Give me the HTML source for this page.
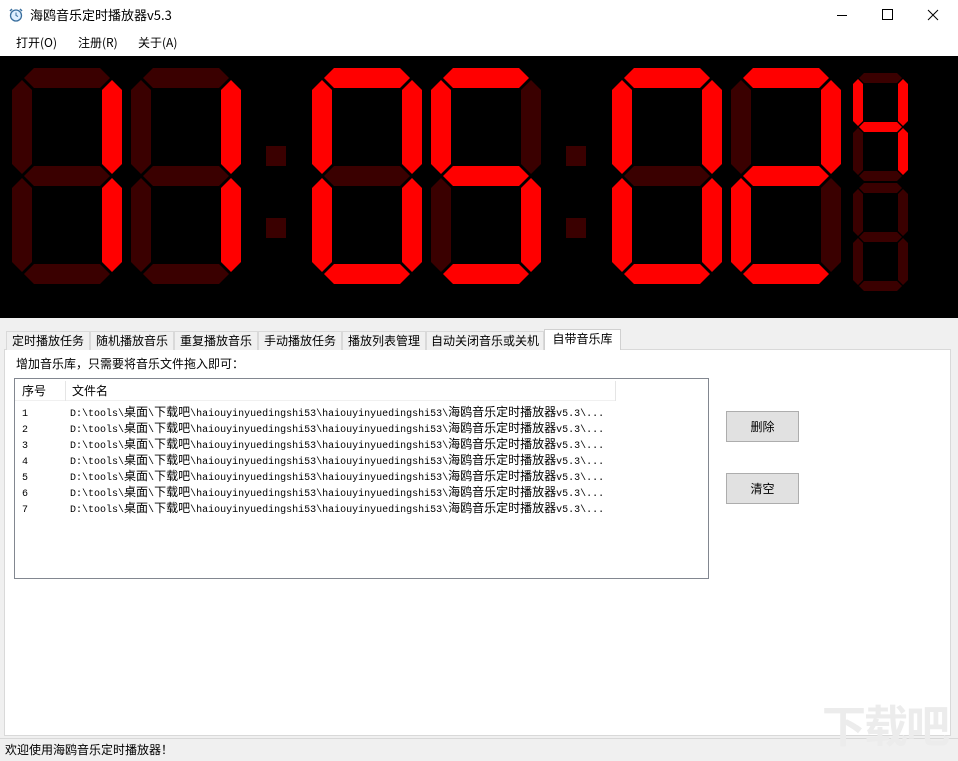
<!DOCTYPE html>
<html><head><meta charset="utf-8"><style>
*{margin:0;padding:0;box-sizing:border-box}
body{width:958px;height:761px;overflow:hidden;background:#f0f0f0;font-family:"Liberation Sans","Noto Sans CJK SC",sans-serif;font-size:12px;color:#000;position:relative}
.abs{position:absolute}
#title{left:0;top:0;width:958px;height:30px;background:#fff}
#menu{left:0;top:30px;width:958px;height:26px;background:#fff}
#clock{left:0;top:56px;width:958px;height:262px;background:#000}
.tab{position:absolute;top:331px;height:19px;border:1px solid #d9d9d9;border-bottom:none;background:#f0f0f0;font-size:12px;line-height:17px;text-align:center;font-family:"Noto Sans CJK SC",sans-serif}
.tab.sel{top:329px;height:21px;background:#fff;border-color:#d0d0d0}
#panel{left:4px;top:349px;width:947px;height:387px;background:#fff;border:1px solid #d9d9d9}
#list{left:14px;top:378px;width:695px;height:201px;background:#fff;border:1px solid #828790}
.row{position:absolute;left:7px;font-family:"Liberation Mono","Noto Sans CJK SC",monospace;font-size:10px;line-height:14px;white-space:pre}
.row .c{font-size:12px;font-family:"Noto Sans CJK SC",sans-serif}
.btn{position:absolute;left:726px;width:73px;height:31px;background:#e1e1e1;border:1px solid #adadad;text-align:center;line-height:29px;font-family:"Noto Sans CJK SC",sans-serif;font-size:12px}
#status{left:0;top:738px;width:958px;height:23px;background:#f0f0f0;border-top:1px solid #d8d8d8;font-family:"Noto Sans CJK SC",sans-serif;font-size:12px;line-height:22px;padding-left:5px}
</style></head><body>
<div id="title" class="abs">
<svg class="abs" style="left:8px;top:7px" width="16" height="16" viewBox="0 0 16 16"><circle cx="8" cy="8.5" r="5.5" fill="#dfefff" stroke="#3a6f9e" stroke-width="1.3"/><path d="M8 5.5V8.5L10 9.5" stroke="#3a6f9e" fill="none"/><path d="M2 4L4 2M14 4L12 2" stroke="#3a6f9e" stroke-width="1.5"/></svg>
<div class="abs" style="left:30px;top:6px;font-size:13px;font-family:'Noto Sans CJK SC',sans-serif;line-height:18px">海鸥音乐定时播放器v5.3</div>
<svg class="abs" style="left:830px;top:0" width="128" height="30"><path d="M7 15.5H17" stroke="#000"/><rect x="52.5" y="9.5" width="10" height="10" fill="none" stroke="#000"/><path d="M98 10L108 20M108 10L98 20" stroke="#000"/></svg>
</div>
<div id="menu" class="abs" style="font-family:'Noto Sans CJK SC',sans-serif;font-size:12px;line-height:26px">
<span class="abs" style="left:16px">打开(O)</span><span class="abs" style="left:78px">注册(R)</span><span class="abs" style="left:138px">关于(A)</span></div>
<div id="clock" class="abs">
<svg width="958" height="262" viewBox="0 56 958 262">
<defs>
<polygon id="sa" points="12,10 22,0 88,0 98,10 88,20 22,20"/>
<polygon id="sg" points="12,108 22,98 88,98 98,108 88,118 22,118"/>
<polygon id="sd" points="12,206 22,196 88,196 98,206 88,216 22,216"/>
<polygon id="sf" points="10,12 20,22 20,96 10,106 0,96 0,22"/>
<polygon id="sb" points="100,12 110,22 110,96 100,106 90,96 90,22"/>
<polygon id="se" points="10,110 20,120 20,194 10,204 0,194 0,120"/>
<polygon id="sc" points="100,110 110,120 110,194 100,204 90,194 90,120"/>
</defs>
<g transform="translate(12,68)"><use href="#sa" fill="#3a0000"/><use href="#sg" fill="#3a0000"/><use href="#sd" fill="#3a0000"/><use href="#sf" fill="#3a0000"/><use href="#se" fill="#3a0000"/><use href="#sb" fill="#ff0000"/><use href="#sc" fill="#ff0000"/></g>
<g transform="translate(131,68)"><use href="#sa" fill="#3a0000"/><use href="#sg" fill="#3a0000"/><use href="#sd" fill="#3a0000"/><use href="#sf" fill="#3a0000"/><use href="#se" fill="#3a0000"/><use href="#sb" fill="#ff0000"/><use href="#sc" fill="#ff0000"/></g>
<rect x="266" y="146" width="20" height="20" fill="#3a0000"/><rect x="266" y="218" width="20" height="20" fill="#3a0000"/>
<g transform="translate(312,68)"><use href="#sa" fill="#ff0000"/><use href="#sg" fill="#3a0000"/><use href="#sd" fill="#ff0000"/><use href="#sf" fill="#ff0000"/><use href="#se" fill="#ff0000"/><use href="#sb" fill="#ff0000"/><use href="#sc" fill="#ff0000"/></g>
<g transform="translate(431,68)"><use href="#sa" fill="#ff0000"/><use href="#sg" fill="#ff0000"/><use href="#sd" fill="#ff0000"/><use href="#sf" fill="#ff0000"/><use href="#se" fill="#3a0000"/><use href="#sb" fill="#3a0000"/><use href="#sc" fill="#ff0000"/></g>
<rect x="566" y="146" width="20" height="20" fill="#3a0000"/><rect x="566" y="218" width="20" height="20" fill="#3a0000"/>
<g transform="translate(612,68)"><use href="#sa" fill="#ff0000"/><use href="#sg" fill="#3a0000"/><use href="#sd" fill="#ff0000"/><use href="#sf" fill="#ff0000"/><use href="#se" fill="#ff0000"/><use href="#sb" fill="#ff0000"/><use href="#sc" fill="#ff0000"/></g>
<g transform="translate(731,68)"><use href="#sa" fill="#ff0000"/><use href="#sg" fill="#ff0000"/><use href="#sd" fill="#ff0000"/><use href="#sf" fill="#3a0000"/><use href="#se" fill="#ff0000"/><use href="#sb" fill="#ff0000"/><use href="#sc" fill="#3a0000"/></g>
<g transform="translate(853,73) scale(0.5)"><use href="#sa" fill="#3a0000"/><use href="#sg" fill="#ff0000"/><use href="#sd" fill="#3a0000"/><use href="#sf" fill="#ff0000"/><use href="#se" fill="#3a0000"/><use href="#sb" fill="#ff0000"/><use href="#sc" fill="#ff0000"/></g>
<g transform="translate(853,183) scale(0.5)" fill="#3a0000"><use href="#sa"/><use href="#sg"/><use href="#sd"/><use href="#sf"/><use href="#se"/><use href="#sb"/><use href="#sc"/></g>
</svg>
</div>
<div id="panel" class="abs"></div>
<div class="tab" style="left:6px;width:84px">定时播放任务</div>
<div class="tab" style="left:90px;width:84px">随机播放音乐</div>
<div class="tab" style="left:174px;width:84px">重复播放音乐</div>
<div class="tab" style="left:258px;width:84px">手动播放任务</div>
<div class="tab" style="left:342px;width:84px">播放列表管理</div>
<div class="tab" style="left:426px;width:118px">自动关闭音乐或关机</div>
<div class="tab sel" style="left:544px;width:77px">自带音乐库</div>
<div class="abs" style="left:16px;top:355px;font-family:'Noto Sans CJK SC',sans-serif;line-height:18px">增加音乐库，只需要将音乐文件拖入即可：</div>
<div id="list" class="abs">
<div class="abs" style="left:0;top:2px;width:600px;height:20px;border-bottom:1px solid #f0f0f0;font-family:'Noto Sans CJK SC',sans-serif;line-height:20px">
<span class="abs" style="left:7px">序号</span><span class="abs" style="left:50px;top:0;height:20px;border-left:1px solid #e5e5e5"></span><span class="abs" style="left:57px">文件名</span><span class="abs" style="left:600px;top:0;height:20px;border-left:1px solid #e5e5e5"></span></div>
<div class="row" style="top:26px">1       D:\tools\<span class="c">桌面</span>\<span class="c">下载吧</span>\haiouyinyuedingshi53\haiouyinyuedingshi53\<span class="c">海鸥音乐定时播放器</span>v5.3\...</div>
<div class="row" style="top:42px">2       D:\tools\<span class="c">桌面</span>\<span class="c">下载吧</span>\haiouyinyuedingshi53\haiouyinyuedingshi53\<span class="c">海鸥音乐定时播放器</span>v5.3\...</div>
<div class="row" style="top:58px">3       D:\tools\<span class="c">桌面</span>\<span class="c">下载吧</span>\haiouyinyuedingshi53\haiouyinyuedingshi53\<span class="c">海鸥音乐定时播放器</span>v5.3\...</div>
<div class="row" style="top:74px">4       D:\tools\<span class="c">桌面</span>\<span class="c">下载吧</span>\haiouyinyuedingshi53\haiouyinyuedingshi53\<span class="c">海鸥音乐定时播放器</span>v5.3\...</div>
<div class="row" style="top:90px">5       D:\tools\<span class="c">桌面</span>\<span class="c">下载吧</span>\haiouyinyuedingshi53\haiouyinyuedingshi53\<span class="c">海鸥音乐定时播放器</span>v5.3\...</div>
<div class="row" style="top:106px">6       D:\tools\<span class="c">桌面</span>\<span class="c">下载吧</span>\haiouyinyuedingshi53\haiouyinyuedingshi53\<span class="c">海鸥音乐定时播放器</span>v5.3\...</div>
<div class="row" style="top:122px">7       D:\tools\<span class="c">桌面</span>\<span class="c">下载吧</span>\haiouyinyuedingshi53\haiouyinyuedingshi53\<span class="c">海鸥音乐定时播放器</span>v5.3\...</div>
</div>
<div class="btn" style="top:411px">删除</div>
<div class="btn" style="top:473px">清空</div>
<div id="status" class="abs">欢迎使用海鸥音乐定时播放器！</div>
<div class="abs" style="left:822px;top:698px;font-family:'Noto Sans CJK SC',sans-serif;font-size:44px;font-weight:bold;color:#ececec;line-height:50px;letter-spacing:-2px">下载吧</div>
</body></html>
